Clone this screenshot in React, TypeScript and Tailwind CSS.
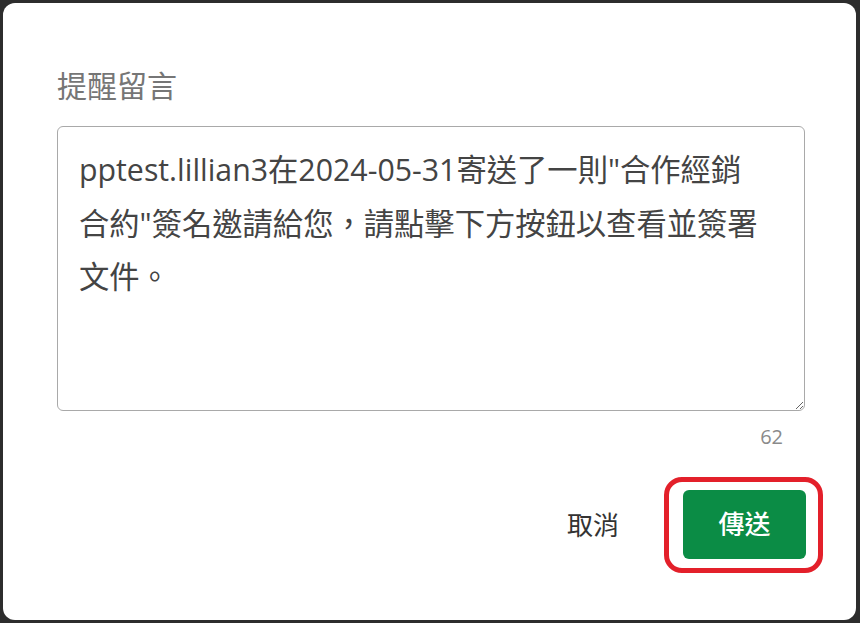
import React, { useState } from 'react';

const FONT = "font-['Open_Sans','Noto_Sans_CJK_TC',sans-serif]";

const INITIAL =
    'pptest.lillian3在2024-05-31寄送了一則"合作經銷合約"簽名邀請給您，請點擊下方按鈕以查看並簽署文件。';

const ReminderDialog: React.FC = () => {
    const [message, setMessage] = useState(INITIAL);

    return (
        <div className="bg-white rounded-[12px] h-full flex flex-col pt-[62px] pl-[54px] pr-[51px]">
            <h2 className="text-[30px] leading-[42px] text-[#767676] font-normal mb-[19px]">提醒留言</h2>

            <textarea
                className="w-full h-[285px] border border-[#a9a9a9] rounded-[6px] pl-[21px] pr-[33px] pt-[16px] text-[30.3px] leading-[53.5px] text-[#444] outline-none resize-y"
                value={message}
                onChange={(e) => setMessage(e.target.value)}
            />

            <div className="flex justify-end mt-[12px] mr-[22px]">
                <span className="text-[20px] leading-[28px] text-[#8a8a8a]">{message.length}</span>
            </div>

            {/* action row, the send button is circled in red */}
            <div className="flex items-center justify-end mt-[26px] -mr-[18px]">
                <button className="text-[26px] text-[#333] px-[2px] mr-[43px]">取消</button>
                <div className="border-[5px] border-[#e3202a] rounded-[18px] pl-[14px] pr-[12px] pt-[8px] pb-[9px]">
                    <button className="w-[123px] h-[69px] bg-[#0b8c45] rounded-[6px] text-white text-[26px] font-medium">
                        傳送
                    </button>
                </div>
            </div>
        </div>
    );
};

export default function App() {
    return (
        <div className={`${FONT} w-[860px] h-[623px] bg-[#2d2d2d] pt-[3px] pl-[3px] pr-[4px] pb-[3px]`}>
            <ReminderDialog />
        </div>
    );
}
